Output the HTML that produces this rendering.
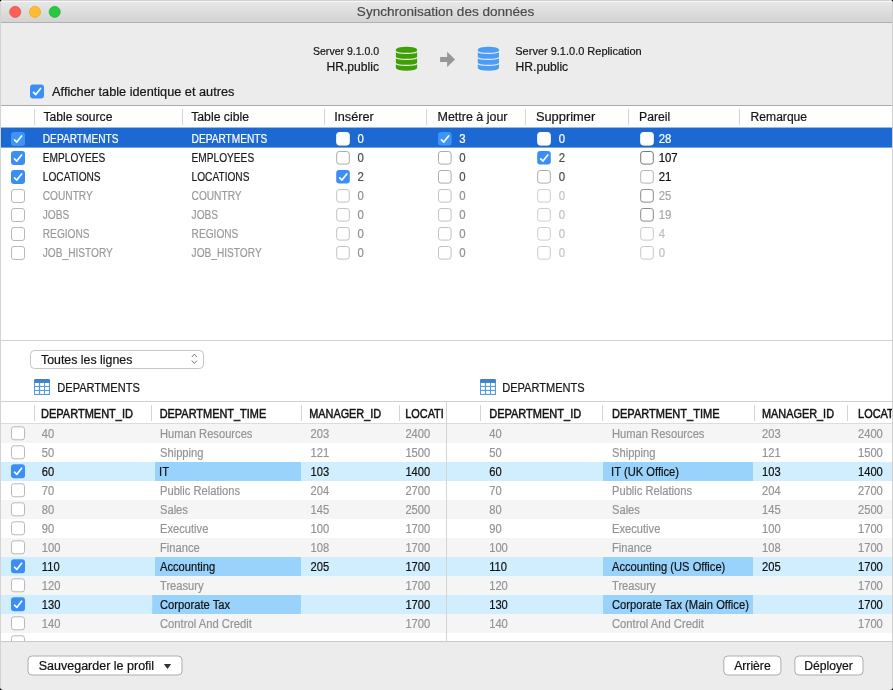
<!DOCTYPE html>
<html><head><meta charset="utf-8"><title>Synchronisation des données</title>
<style>html,body{margin:0;padding:0;background:#000;overflow:hidden} svg{display:block;will-change:transform} text{font-family:"Liberation Sans", sans-serif}</style></head>
<body><svg width="893" height="690" viewBox="0 0 893 690">
<rect x="0" y="0" width="893" height="690" rx="0" fill="#000" />
<defs><linearGradient id="tb" x1="0" y1="0" x2="0" y2="1"><stop offset="0" stop-color="#e9e9e9"/><stop offset="1" stop-color="#d3d3d3"/></linearGradient><clipPath id="cl1"><rect x="1" y="402" width="445" height="239"/></clipPath><clipPath id="cl2"><rect x="447" y="402" width="445" height="239"/></clipPath></defs>
<rect x="0" y="0" width="893" height="690" rx="3.5" fill="#ececec" />
<path d="M0,3.5 A3.5,3.5 0 0 1 3.5,0 H889.5 A3.5,3.5 0 0 1 893,3.5 V22 H0 Z" fill="url(#tb)"/>
<rect x="3" y="0" width="887" height="1" fill="#d2d2d2"/>
<rect x="2" y="1" width="889" height="1" fill="#f7f7f7"/>
<rect x="0" y="22" width="893" height="1" fill="#b1b1b1"/>
<rect x="0" y="3" width="1" height="684" fill="#d3d3d3"/>
<rect x="892" y="3" width="1" height="684" fill="#d0d0d0"/>
<circle cx="15.2" cy="11.9" r="5.6" fill="#fe5f57" stroke="#e2463f" stroke-width="0.6"/>
<circle cx="35.0" cy="11.9" r="5.6" fill="#febc2e" stroke="#e1a325" stroke-width="0.6"/>
<circle cx="54.7" cy="11.9" r="5.6" fill="#28c840" stroke="#1dad2b" stroke-width="0.6"/>
<text x="356.86" y="16.3" font-size="13" fill="#4b4b4b" stroke="#4b4b4b" stroke-width="0.2" textLength="177.48" lengthAdjust="spacingAndGlyphs">Synchronisation des données</text>
<text x="313.00" y="54.8" font-size="11" fill="#151515" stroke="#151515" stroke-width="0.2" textLength="66.11" lengthAdjust="spacingAndGlyphs">Server 9.1.0.0</text>
<text x="326.50" y="70.6" font-size="12" fill="#151515" stroke="#151515" stroke-width="0.2" textLength="52.50" lengthAdjust="spacingAndGlyphs">HR.public</text>
<text x="515.30" y="54.8" font-size="11" fill="#151515" stroke="#151515" stroke-width="0.2" textLength="126.42" lengthAdjust="spacingAndGlyphs">Server 9.1.0.0 Replication</text>
<text x="515.60" y="70.6" font-size="12" fill="#151515" stroke="#151515" stroke-width="0.2" textLength="52.60" lengthAdjust="spacingAndGlyphs">HR.public</text>
<path d="M395.9,49.7 A10.6,3 0 0 1 417.09999999999997,49.7 V68 A10.6,2.8 0 0 1 395.9,68 Z" fill="#3ea005"/>
<path d="M395.4,50.9 A11.1,2.5 0 0 0 417.59999999999997,50.9" fill="none" stroke="#ececec" stroke-width="1.1"/>
<path d="M395.4,56.9 A11.1,2.5 0 0 0 417.59999999999997,56.9" fill="none" stroke="#ececec" stroke-width="1.1"/>
<path d="M395.4,62.9 A11.1,2.5 0 0 0 417.59999999999997,62.9" fill="none" stroke="#ececec" stroke-width="1.1"/>
<path d="M477.8,49.7 A10.6,3 0 0 1 499.0,49.7 V68 A10.6,2.8 0 0 1 477.8,68 Z" fill="#4b9cf4"/>
<path d="M477.3,50.9 A11.1,2.5 0 0 0 499.5,50.9" fill="none" stroke="#ececec" stroke-width="1.1"/>
<path d="M477.3,56.9 A11.1,2.5 0 0 0 499.5,56.9" fill="none" stroke="#ececec" stroke-width="1.1"/>
<path d="M477.3,62.9 A11.1,2.5 0 0 0 499.5,62.9" fill="none" stroke="#ececec" stroke-width="1.1"/>
<path d="M440.1,57.1 H447.1 V51.8 L455.1,59.4 L447.1,67 V61.9 H440.1 Z" fill="#979797"/>
<rect x="30" y="84.5" width="14" height="14" rx="3" fill="#3b8ef6"/>
<path d="M33.5,92.4 L35.8,94.6 L40.6,88.4" fill="none" stroke="#fff" stroke-width="1.65" stroke-linecap="round" stroke-linejoin="round"/>
<text x="52.10" y="96" font-size="12" fill="#151515" stroke="#151515" stroke-width="0.2" textLength="182.30" lengthAdjust="spacingAndGlyphs">Afficher table identique et autres</text>
<rect x="1" y="105.5" width="891" height="234.5" rx="0" fill="#ffffff" />
<rect x="1" y="105" width="891" height="1" fill="#ababab"/>
<rect x="1" y="127" width="891" height="1" fill="#dadada"/>
<rect x="1" y="340" width="891" height="1" fill="#d2d2d2"/>
<rect x="34" y="109" width="1" height="16" fill="#d6d6d6"/>
<rect x="182" y="109" width="1" height="16" fill="#d6d6d6"/>
<rect x="324" y="109" width="1" height="16" fill="#d6d6d6"/>
<rect x="426" y="109" width="1" height="16" fill="#d6d6d6"/>
<rect x="525" y="109" width="1" height="16" fill="#d6d6d6"/>
<rect x="628" y="109" width="1" height="16" fill="#d6d6d6"/>
<rect x="739" y="109" width="1" height="16" fill="#d6d6d6"/>
<text x="43.40" y="120.7" font-size="12" fill="#151515" stroke="#151515" stroke-width="0.2" textLength="69.07" lengthAdjust="spacingAndGlyphs">Table source</text>
<text x="191.20" y="120.7" font-size="12" fill="#151515" stroke="#151515" stroke-width="0.2" textLength="57.84" lengthAdjust="spacingAndGlyphs">Table cible</text>
<text x="334.24" y="120.7" font-size="12" fill="#151515" stroke="#151515" stroke-width="0.2" textLength="39.55" lengthAdjust="spacingAndGlyphs">Insérer</text>
<text x="437.50" y="120.7" font-size="12" fill="#151515" stroke="#151515" stroke-width="0.2" textLength="70.00" lengthAdjust="spacingAndGlyphs">Mettre à jour</text>
<text x="535.90" y="120.7" font-size="12" fill="#151515" stroke="#151515" stroke-width="0.2" textLength="59.30" lengthAdjust="spacingAndGlyphs">Supprimer</text>
<text x="639.00" y="120.7" font-size="12" fill="#151515" stroke="#151515" stroke-width="0.2" textLength="31.18" lengthAdjust="spacingAndGlyphs">Pareil</text>
<text x="750.60" y="120.7" font-size="12" fill="#151515" stroke="#151515" stroke-width="0.2" textLength="56.47" lengthAdjust="spacingAndGlyphs">Remarque</text>
<rect x="1" y="127.7" width="891" height="19.9" rx="0" fill="#1d69d3" />
<rect x="11" y="132" width="14" height="14" rx="3" fill="#3d95f8"/>
<path d="M14.5,139.9 L16.8,142.1 L21.6,135.9" fill="none" stroke="#fff" stroke-width="1.65" stroke-linecap="round" stroke-linejoin="round"/>
<text x="42.80" y="142.6" font-size="12" fill="#ffffff" stroke="#ffffff" stroke-width="0.2" textLength="75.68" lengthAdjust="spacingAndGlyphs">DEPARTMENTS</text>
<text x="191.60" y="142.6" font-size="12" fill="#ffffff" stroke="#ffffff" stroke-width="0.2" textLength="75.68" lengthAdjust="spacingAndGlyphs">DEPARTMENTS</text>
<rect x="336.7" y="132.5" width="12.6" height="12.6" rx="2.5" fill="#ffffff" stroke="#ffffff" stroke-width="1"/>
<text x="357.60" y="142.6" font-size="12" fill="#ffffff" stroke="#ffffff" stroke-width="0.2" textLength="6.34" lengthAdjust="spacingAndGlyphs">0</text>
<rect x="438.0" y="132" width="13.6" height="13.6" rx="3" fill="#3d95f8"/>
<path d="M441.5,139.9 L443.8,142.1 L448.6,135.9" fill="none" stroke="#fff" stroke-width="1.65" stroke-linecap="round" stroke-linejoin="round"/>
<text x="459.20" y="142.6" font-size="12" fill="#ffffff" stroke="#ffffff" stroke-width="0.2" textLength="6.34" lengthAdjust="spacingAndGlyphs">3</text>
<rect x="537.7" y="132.5" width="12.6" height="12.6" rx="2.5" fill="#ffffff" stroke="#ffffff" stroke-width="1"/>
<text x="558.80" y="142.6" font-size="12" fill="#ffffff" stroke="#ffffff" stroke-width="0.2" textLength="6.34" lengthAdjust="spacingAndGlyphs">0</text>
<rect x="640.7" y="132.5" width="12.6" height="12.6" rx="2.5" fill="#ffffff" stroke="#ffffff" stroke-width="1"/>
<text x="658.70" y="142.6" font-size="12" fill="#ffffff" stroke="#ffffff" stroke-width="0.2" textLength="12.68" lengthAdjust="spacingAndGlyphs">28</text>
<rect x="11" y="151" width="14" height="14" rx="3" fill="#3b8ef6"/>
<path d="M14.5,158.9 L16.8,161.1 L21.6,154.9" fill="none" stroke="#fff" stroke-width="1.65" stroke-linecap="round" stroke-linejoin="round"/>
<text x="42.80" y="161.6" font-size="12" fill="#1a1a1a" stroke="#1a1a1a" stroke-width="0.2" textLength="62.55" lengthAdjust="spacingAndGlyphs">EMPLOYEES</text>
<text x="191.60" y="161.6" font-size="12" fill="#1a1a1a" stroke="#1a1a1a" stroke-width="0.2" textLength="62.55" lengthAdjust="spacingAndGlyphs">EMPLOYEES</text>
<rect x="336.7" y="151.5" width="12.6" height="12.6" rx="2.5" fill="#ffffff" stroke="#ababab" stroke-width="1"/>
<text x="357.60" y="161.6" font-size="12" fill="#4a4a4a" stroke="#4a4a4a" stroke-width="0.2" textLength="6.34" lengthAdjust="spacingAndGlyphs">0</text>
<rect x="438.5" y="151.5" width="12.6" height="12.6" rx="2.5" fill="#ffffff" stroke="#ababab" stroke-width="1"/>
<text x="459.20" y="161.6" font-size="12" fill="#4a4a4a" stroke="#4a4a4a" stroke-width="0.2" textLength="6.34" lengthAdjust="spacingAndGlyphs">0</text>
<rect x="537.2" y="151" width="13.6" height="13.6" rx="3" fill="#3b8ef6"/>
<path d="M540.7,158.9 L543.0,161.1 L547.8000000000001,154.9" fill="none" stroke="#fff" stroke-width="1.65" stroke-linecap="round" stroke-linejoin="round"/>
<text x="558.80" y="161.6" font-size="12" fill="#4a4a4a" stroke="#4a4a4a" stroke-width="0.2" textLength="6.34" lengthAdjust="spacingAndGlyphs">2</text>
<rect x="640.7" y="151.5" width="12.6" height="12.6" rx="2.5" fill="#ffffff" stroke="#777777" stroke-width="1"/>
<text x="658.70" y="161.6" font-size="12" fill="#111111" stroke="#111111" stroke-width="0.2" textLength="19.02" lengthAdjust="spacingAndGlyphs">107</text>
<rect x="11" y="170" width="14" height="14" rx="3" fill="#3b8ef6"/>
<path d="M14.5,177.9 L16.8,180.1 L21.6,173.9" fill="none" stroke="#fff" stroke-width="1.65" stroke-linecap="round" stroke-linejoin="round"/>
<text x="42.80" y="180.6" font-size="12" fill="#1a1a1a" stroke="#1a1a1a" stroke-width="0.2" textLength="57.84" lengthAdjust="spacingAndGlyphs">LOCATIONS</text>
<text x="191.60" y="180.6" font-size="12" fill="#1a1a1a" stroke="#1a1a1a" stroke-width="0.2" textLength="57.84" lengthAdjust="spacingAndGlyphs">LOCATIONS</text>
<rect x="336.2" y="170" width="13.6" height="13.6" rx="3" fill="#3b8ef6"/>
<path d="M339.7,177.9 L342.0,180.1 L346.8,173.9" fill="none" stroke="#fff" stroke-width="1.65" stroke-linecap="round" stroke-linejoin="round"/>
<text x="357.60" y="180.6" font-size="12" fill="#4a4a4a" stroke="#4a4a4a" stroke-width="0.2" textLength="6.34" lengthAdjust="spacingAndGlyphs">2</text>
<rect x="438.5" y="170.5" width="12.6" height="12.6" rx="2.5" fill="#ffffff" stroke="#ababab" stroke-width="1"/>
<text x="459.20" y="180.6" font-size="12" fill="#4a4a4a" stroke="#4a4a4a" stroke-width="0.2" textLength="6.34" lengthAdjust="spacingAndGlyphs">0</text>
<rect x="537.7" y="170.5" width="12.6" height="12.6" rx="2.5" fill="#ffffff" stroke="#ababab" stroke-width="1"/>
<text x="558.80" y="180.6" font-size="12" fill="#4a4a4a" stroke="#4a4a4a" stroke-width="0.2" textLength="6.34" lengthAdjust="spacingAndGlyphs">0</text>
<rect x="640.7" y="170.5" width="12.6" height="12.6" rx="2.5" fill="#ffffff" stroke="#b4b4b4" stroke-width="1"/>
<text x="658.70" y="180.6" font-size="12" fill="#111111" stroke="#111111" stroke-width="0.2" textLength="12.68" lengthAdjust="spacingAndGlyphs">21</text>
<rect x="11.5" y="189.5" width="13" height="13" rx="2.5" fill="#ffffff" stroke="#b8b8b8" stroke-width="1"/>
<text x="42.80" y="199.6" font-size="12" fill="#9a9a9a" stroke="#9a9a9a" stroke-width="0.2" textLength="49.95" lengthAdjust="spacingAndGlyphs">COUNTRY</text>
<text x="191.60" y="199.6" font-size="12" fill="#9a9a9a" stroke="#9a9a9a" stroke-width="0.2" textLength="49.95" lengthAdjust="spacingAndGlyphs">COUNTRY</text>
<rect x="336.7" y="189.5" width="12.6" height="12.6" rx="2.5" fill="#ffffff" stroke="#c2c2c2" stroke-width="1"/>
<text x="357.60" y="199.6" font-size="12" fill="#8f8f8f" stroke="#8f8f8f" stroke-width="0.2" textLength="6.34" lengthAdjust="spacingAndGlyphs">0</text>
<rect x="438.5" y="189.5" width="12.6" height="12.6" rx="2.5" fill="#ffffff" stroke="#c2c2c2" stroke-width="1"/>
<text x="459.20" y="199.6" font-size="12" fill="#8f8f8f" stroke="#8f8f8f" stroke-width="0.2" textLength="6.34" lengthAdjust="spacingAndGlyphs">0</text>
<rect x="537.7" y="189.5" width="12.6" height="12.6" rx="2.5" fill="#ffffff" stroke="#cdcdcd" stroke-width="1"/>
<text x="558.80" y="199.6" font-size="12" fill="#c3c3c3" stroke="#c3c3c3" stroke-width="0.2" textLength="6.34" lengthAdjust="spacingAndGlyphs">0</text>
<rect x="640.7" y="189.5" width="12.6" height="12.6" rx="2.5" fill="#ffffff" stroke="#8a8a8a" stroke-width="1"/>
<text x="658.70" y="199.6" font-size="12" fill="#a8a8a8" stroke="#a8a8a8" stroke-width="0.2" textLength="12.68" lengthAdjust="spacingAndGlyphs">25</text>
<rect x="11.5" y="208.5" width="13" height="13" rx="2.5" fill="#ffffff" stroke="#b8b8b8" stroke-width="1"/>
<text x="42.80" y="218.6" font-size="12" fill="#9a9a9a" stroke="#9a9a9a" stroke-width="0.2" textLength="26.48" lengthAdjust="spacingAndGlyphs">JOBS</text>
<text x="191.60" y="218.6" font-size="12" fill="#9a9a9a" stroke="#9a9a9a" stroke-width="0.2" textLength="26.48" lengthAdjust="spacingAndGlyphs">JOBS</text>
<rect x="336.7" y="208.5" width="12.6" height="12.6" rx="2.5" fill="#ffffff" stroke="#c2c2c2" stroke-width="1"/>
<text x="357.60" y="218.6" font-size="12" fill="#8f8f8f" stroke="#8f8f8f" stroke-width="0.2" textLength="6.34" lengthAdjust="spacingAndGlyphs">0</text>
<rect x="438.5" y="208.5" width="12.6" height="12.6" rx="2.5" fill="#ffffff" stroke="#c2c2c2" stroke-width="1"/>
<text x="459.20" y="218.6" font-size="12" fill="#8f8f8f" stroke="#8f8f8f" stroke-width="0.2" textLength="6.34" lengthAdjust="spacingAndGlyphs">0</text>
<rect x="537.7" y="208.5" width="12.6" height="12.6" rx="2.5" fill="#ffffff" stroke="#cdcdcd" stroke-width="1"/>
<text x="558.80" y="218.6" font-size="12" fill="#c3c3c3" stroke="#c3c3c3" stroke-width="0.2" textLength="6.34" lengthAdjust="spacingAndGlyphs">0</text>
<rect x="640.7" y="208.5" width="12.6" height="12.6" rx="2.5" fill="#ffffff" stroke="#8a8a8a" stroke-width="1"/>
<text x="658.70" y="218.6" font-size="12" fill="#a8a8a8" stroke="#a8a8a8" stroke-width="0.2" textLength="12.68" lengthAdjust="spacingAndGlyphs">19</text>
<rect x="11.5" y="227.5" width="13" height="13" rx="2.5" fill="#ffffff" stroke="#b8b8b8" stroke-width="1"/>
<text x="42.80" y="237.6" font-size="12" fill="#9a9a9a" stroke="#9a9a9a" stroke-width="0.2" textLength="46.76" lengthAdjust="spacingAndGlyphs">REGIONS</text>
<text x="191.60" y="237.6" font-size="12" fill="#9a9a9a" stroke="#9a9a9a" stroke-width="0.2" textLength="46.76" lengthAdjust="spacingAndGlyphs">REGIONS</text>
<rect x="336.7" y="227.5" width="12.6" height="12.6" rx="2.5" fill="#ffffff" stroke="#c2c2c2" stroke-width="1"/>
<text x="357.60" y="237.6" font-size="12" fill="#8f8f8f" stroke="#8f8f8f" stroke-width="0.2" textLength="6.34" lengthAdjust="spacingAndGlyphs">0</text>
<rect x="438.5" y="227.5" width="12.6" height="12.6" rx="2.5" fill="#ffffff" stroke="#c2c2c2" stroke-width="1"/>
<text x="459.20" y="237.6" font-size="12" fill="#8f8f8f" stroke="#8f8f8f" stroke-width="0.2" textLength="6.34" lengthAdjust="spacingAndGlyphs">0</text>
<rect x="537.7" y="227.5" width="12.6" height="12.6" rx="2.5" fill="#ffffff" stroke="#cdcdcd" stroke-width="1"/>
<text x="558.80" y="237.6" font-size="12" fill="#c3c3c3" stroke="#c3c3c3" stroke-width="0.2" textLength="6.34" lengthAdjust="spacingAndGlyphs">0</text>
<rect x="640.7" y="227.5" width="12.6" height="12.6" rx="2.5" fill="#ffffff" stroke="#c8c8c8" stroke-width="1"/>
<text x="658.70" y="237.6" font-size="12" fill="#c0c0c0" stroke="#c0c0c0" stroke-width="0.2" textLength="6.34" lengthAdjust="spacingAndGlyphs">4</text>
<rect x="11.5" y="246.5" width="13" height="13" rx="2.5" fill="#ffffff" stroke="#b8b8b8" stroke-width="1"/>
<text x="42.80" y="256.6" font-size="12" fill="#9a9a9a" stroke="#9a9a9a" stroke-width="0.2" textLength="70.06" lengthAdjust="spacingAndGlyphs">JOB_HISTORY</text>
<text x="191.60" y="256.6" font-size="12" fill="#9a9a9a" stroke="#9a9a9a" stroke-width="0.2" textLength="70.06" lengthAdjust="spacingAndGlyphs">JOB_HISTORY</text>
<rect x="336.7" y="246.5" width="12.6" height="12.6" rx="2.5" fill="#ffffff" stroke="#c2c2c2" stroke-width="1"/>
<text x="357.60" y="256.6" font-size="12" fill="#8f8f8f" stroke="#8f8f8f" stroke-width="0.2" textLength="6.34" lengthAdjust="spacingAndGlyphs">0</text>
<rect x="438.5" y="246.5" width="12.6" height="12.6" rx="2.5" fill="#ffffff" stroke="#c2c2c2" stroke-width="1"/>
<text x="459.20" y="256.6" font-size="12" fill="#8f8f8f" stroke="#8f8f8f" stroke-width="0.2" textLength="6.34" lengthAdjust="spacingAndGlyphs">0</text>
<rect x="537.7" y="246.5" width="12.6" height="12.6" rx="2.5" fill="#ffffff" stroke="#cdcdcd" stroke-width="1"/>
<text x="558.80" y="256.6" font-size="12" fill="#c3c3c3" stroke="#c3c3c3" stroke-width="0.2" textLength="6.34" lengthAdjust="spacingAndGlyphs">0</text>
<rect x="640.7" y="246.5" width="12.6" height="12.6" rx="2.5" fill="#ffffff" stroke="#c8c8c8" stroke-width="1"/>
<text x="658.70" y="256.6" font-size="12" fill="#c0c0c0" stroke="#c0c0c0" stroke-width="0.2" textLength="6.34" lengthAdjust="spacingAndGlyphs">0</text>
<rect x="1" y="341" width="891" height="60" rx="0" fill="#ffffff" />
<rect x="30.5" y="350.5" width="173" height="18" rx="4" fill="#ffffff" stroke="#c6c6c6" stroke-width="1" />
<text x="41.00" y="363.5" font-size="12" fill="#151515" stroke="#151515" stroke-width="0.2" textLength="91.38" lengthAdjust="spacingAndGlyphs">Toutes les lignes</text>
<path d="M191.8,357 L194.4,354.2 L197,357 M191.8,360.6 L194.4,363.4 L197,360.6" fill="none" stroke="#6a6a6a" stroke-width="0.9"/>
<path d="M34,380.5 A1.5,1.5 0 0 1 35.5,379 H48.5 A1.5,1.5 0 0 1 50,380.5 V395 H34 Z" fill="#559be4"/>
<rect x="34" y="379" width="16" height="3.7" rx="1.5" fill="#3f82c8" />
<rect x="35.0" y="383.0" width="3.9" height="2.9" rx="0" fill="#ffffff" />
<rect x="35.0" y="387.0" width="3.9" height="2.9" rx="0" fill="#ffffff" />
<rect x="35.0" y="391.0" width="3.9" height="2.9" rx="0" fill="#ffffff" />
<rect x="40.1" y="383.0" width="3.9" height="2.9" rx="0" fill="#ffffff" />
<rect x="40.1" y="387.0" width="3.9" height="2.9" rx="0" fill="#ffffff" />
<rect x="40.1" y="391.0" width="3.9" height="2.9" rx="0" fill="#ffffff" />
<rect x="45.0" y="383.0" width="3.9" height="2.9" rx="0" fill="#ffffff" />
<rect x="45.0" y="387.0" width="3.9" height="2.9" rx="0" fill="#ffffff" />
<rect x="45.0" y="391.0" width="3.9" height="2.9" rx="0" fill="#ffffff" />
<path d="M480,380.5 A1.5,1.5 0 0 1 481.5,379 H494.5 A1.5,1.5 0 0 1 496,380.5 V395 H480 Z" fill="#559be4"/>
<rect x="480" y="379" width="16" height="3.7" rx="1.5" fill="#3f82c8" />
<rect x="481.0" y="383.0" width="3.9" height="2.9" rx="0" fill="#ffffff" />
<rect x="481.0" y="387.0" width="3.9" height="2.9" rx="0" fill="#ffffff" />
<rect x="481.0" y="391.0" width="3.9" height="2.9" rx="0" fill="#ffffff" />
<rect x="486.1" y="383.0" width="3.9" height="2.9" rx="0" fill="#ffffff" />
<rect x="486.1" y="387.0" width="3.9" height="2.9" rx="0" fill="#ffffff" />
<rect x="486.1" y="391.0" width="3.9" height="2.9" rx="0" fill="#ffffff" />
<rect x="491.0" y="383.0" width="3.9" height="2.9" rx="0" fill="#ffffff" />
<rect x="491.0" y="387.0" width="3.9" height="2.9" rx="0" fill="#ffffff" />
<rect x="491.0" y="391.0" width="3.9" height="2.9" rx="0" fill="#ffffff" />
<text x="57.30" y="391.7" font-size="12" fill="#151515" stroke="#151515" stroke-width="0.2" textLength="82.50" lengthAdjust="spacingAndGlyphs">DEPARTMENTS</text>
<text x="502.20" y="391.7" font-size="12" fill="#151515" stroke="#151515" stroke-width="0.2" textLength="82.50" lengthAdjust="spacingAndGlyphs">DEPARTMENTS</text>
<rect x="1" y="401.5" width="891" height="239.5" rx="0" fill="#ffffff" />
<rect x="1" y="401" width="891" height="1" fill="#cfcfcf"/>
<rect x="1" y="423" width="891" height="1" fill="#dcdcdc"/>
<rect x="1" y="641" width="891" height="1" fill="#c9c9c9"/>
<rect x="1" y="424" width="891" height="19" rx="0" fill="#f5f5f5" />
<rect x="1" y="443" width="891" height="19" rx="0" fill="#ffffff" />
<rect x="1" y="462" width="891" height="19" rx="0" fill="#d0eefd" />
<rect x="1" y="481" width="891" height="19" rx="0" fill="#ffffff" />
<rect x="1" y="500" width="891" height="19" rx="0" fill="#f5f5f5" />
<rect x="1" y="519" width="891" height="19" rx="0" fill="#ffffff" />
<rect x="1" y="538" width="891" height="19" rx="0" fill="#f5f5f5" />
<rect x="1" y="557" width="891" height="19" rx="0" fill="#d0eefd" />
<rect x="1" y="576" width="891" height="19" rx="0" fill="#f5f5f5" />
<rect x="1" y="595" width="891" height="19" rx="0" fill="#d0eefd" />
<rect x="1" y="614" width="891" height="19" rx="0" fill="#f5f5f5" />
<rect x="1" y="633" width="891" height="19" rx="0" fill="#ffffff" />
<rect x="155" y="462" width="146" height="19" rx="0" fill="#99d3fb" />
<rect x="603" y="462" width="150" height="19" rx="0" fill="#99d3fb" />
<rect x="155" y="557" width="146" height="19" rx="0" fill="#99d3fb" />
<rect x="603" y="557" width="150" height="19" rx="0" fill="#99d3fb" />
<rect x="152.2" y="595" width="148.8" height="19" rx="0" fill="#99d3fb" />
<rect x="603" y="595" width="150" height="19" rx="0" fill="#99d3fb" />
<rect x="34" y="405" width="1" height="16" fill="#d4d4d4"/>
<text x="41.00" y="417.5" font-size="12" fill="#111111" stroke="#111111" stroke-width="0.45" textLength="91.99" lengthAdjust="spacingAndGlyphs" clip-path="url(#cl1)">DEPARTMENT_ID</text>
<rect x="151" y="405" width="1" height="16" fill="#d4d4d4"/>
<text x="159.70" y="417.5" font-size="12" fill="#111111" stroke="#111111" stroke-width="0.45" textLength="106.50" lengthAdjust="spacingAndGlyphs" clip-path="url(#cl1)">DEPARTMENT_TIME</text>
<rect x="301" y="405" width="1" height="16" fill="#d4d4d4"/>
<text x="309.20" y="417.5" font-size="12" fill="#111111" stroke="#111111" stroke-width="0.45" textLength="72.00" lengthAdjust="spacingAndGlyphs" clip-path="url(#cl1)">MANAGER_ID</text>
<rect x="399" y="405" width="1" height="16" fill="#d4d4d4"/>
<text x="405.20" y="417.5" font-size="12" fill="#111111" stroke="#111111" stroke-width="0.45" textLength="38.63" lengthAdjust="spacingAndGlyphs" clip-path="url(#cl1)">LOCATI</text>
<rect x="480" y="405" width="1" height="16" fill="#d4d4d4"/>
<text x="489.20" y="417.5" font-size="12" fill="#111111" stroke="#111111" stroke-width="0.45" textLength="91.99" lengthAdjust="spacingAndGlyphs" clip-path="url(#cl2)">DEPARTMENT_ID</text>
<rect x="602" y="405" width="1" height="16" fill="#d4d4d4"/>
<text x="612.00" y="417.5" font-size="12" fill="#111111" stroke="#111111" stroke-width="0.45" textLength="107.60" lengthAdjust="spacingAndGlyphs" clip-path="url(#cl2)">DEPARTMENT_TIME</text>
<rect x="754" y="405" width="1" height="16" fill="#d4d4d4"/>
<text x="762.00" y="417.5" font-size="12" fill="#111111" stroke="#111111" stroke-width="0.45" textLength="72.00" lengthAdjust="spacingAndGlyphs" clip-path="url(#cl2)">MANAGER_ID</text>
<rect x="847" y="405" width="1" height="16" fill="#d4d4d4"/>
<text x="858.10" y="417.5" font-size="12" fill="#111111" stroke="#111111" stroke-width="0.45" textLength="72.00" lengthAdjust="spacingAndGlyphs" clip-path="url(#cl2)">LOCATION_ID</text>
<rect x="11.5" y="426.8" width="13" height="13" rx="2.5" fill="#ffffff" stroke="#b8b8b8" stroke-width="1"/>
<text x="41.80" y="437.5" font-size="12" fill="#949494" stroke="#949494" stroke-width="0.2" textLength="12.41" lengthAdjust="spacingAndGlyphs" clip-path="url(#cl1)">40</text>
<text x="160.00" y="437.5" font-size="12" fill="#949494" stroke="#949494" stroke-width="0.2" textLength="92.42" lengthAdjust="spacingAndGlyphs" clip-path="url(#cl1)">Human Resources</text>
<text x="310.50" y="437.5" font-size="12" fill="#949494" stroke="#949494" stroke-width="0.2" textLength="18.62" lengthAdjust="spacingAndGlyphs" clip-path="url(#cl1)">203</text>
<text x="405.40" y="437.5" font-size="12" fill="#949494" stroke="#949494" stroke-width="0.2" textLength="24.83" lengthAdjust="spacingAndGlyphs" clip-path="url(#cl1)">2400</text>
<text x="489.20" y="437.5" font-size="12" fill="#949494" stroke="#949494" stroke-width="0.2" textLength="12.41" lengthAdjust="spacingAndGlyphs" clip-path="url(#cl2)">40</text>
<text x="612.00" y="437.5" font-size="12" fill="#949494" stroke="#949494" stroke-width="0.2" textLength="92.42" lengthAdjust="spacingAndGlyphs" clip-path="url(#cl2)">Human Resources</text>
<text x="762.00" y="437.5" font-size="12" fill="#949494" stroke="#949494" stroke-width="0.2" textLength="18.62" lengthAdjust="spacingAndGlyphs" clip-path="url(#cl2)">203</text>
<text x="858.00" y="437.5" font-size="12" fill="#949494" stroke="#949494" stroke-width="0.2" textLength="24.83" lengthAdjust="spacingAndGlyphs" clip-path="url(#cl2)">2400</text>
<rect x="11.5" y="445.8" width="13" height="13" rx="2.5" fill="#ffffff" stroke="#b8b8b8" stroke-width="1"/>
<text x="41.80" y="456.5" font-size="12" fill="#949494" stroke="#949494" stroke-width="0.2" textLength="12.41" lengthAdjust="spacingAndGlyphs" clip-path="url(#cl1)">50</text>
<text x="160.00" y="456.5" font-size="12" fill="#949494" stroke="#949494" stroke-width="0.2" textLength="43.44" lengthAdjust="spacingAndGlyphs" clip-path="url(#cl1)">Shipping</text>
<text x="310.50" y="456.5" font-size="12" fill="#949494" stroke="#949494" stroke-width="0.2" textLength="18.62" lengthAdjust="spacingAndGlyphs" clip-path="url(#cl1)">121</text>
<text x="405.40" y="456.5" font-size="12" fill="#949494" stroke="#949494" stroke-width="0.2" textLength="24.83" lengthAdjust="spacingAndGlyphs" clip-path="url(#cl1)">1500</text>
<text x="489.20" y="456.5" font-size="12" fill="#949494" stroke="#949494" stroke-width="0.2" textLength="12.41" lengthAdjust="spacingAndGlyphs" clip-path="url(#cl2)">50</text>
<text x="612.00" y="456.5" font-size="12" fill="#949494" stroke="#949494" stroke-width="0.2" textLength="43.44" lengthAdjust="spacingAndGlyphs" clip-path="url(#cl2)">Shipping</text>
<text x="762.00" y="456.5" font-size="12" fill="#949494" stroke="#949494" stroke-width="0.2" textLength="18.62" lengthAdjust="spacingAndGlyphs" clip-path="url(#cl2)">121</text>
<text x="858.00" y="456.5" font-size="12" fill="#949494" stroke="#949494" stroke-width="0.2" textLength="24.83" lengthAdjust="spacingAndGlyphs" clip-path="url(#cl2)">1500</text>
<rect x="11" y="464.3" width="14" height="14" rx="3" fill="#3b8ef6"/>
<path d="M14.5,472.2 L16.8,474.40000000000003 L21.6,468.2" fill="none" stroke="#fff" stroke-width="1.65" stroke-linecap="round" stroke-linejoin="round"/>
<text x="41.80" y="475.5" font-size="12" fill="#111111" stroke="#111111" stroke-width="0.2" textLength="12.41" lengthAdjust="spacingAndGlyphs" clip-path="url(#cl1)">60</text>
<text x="159.07" y="475.5" font-size="12" fill="#111111" stroke="#111111" stroke-width="0.2" textLength="9.92" lengthAdjust="spacingAndGlyphs" clip-path="url(#cl1)">IT</text>
<text x="310.50" y="475.5" font-size="12" fill="#111111" stroke="#111111" stroke-width="0.2" textLength="18.62" lengthAdjust="spacingAndGlyphs" clip-path="url(#cl1)">103</text>
<text x="405.40" y="475.5" font-size="12" fill="#111111" stroke="#111111" stroke-width="0.2" textLength="24.83" lengthAdjust="spacingAndGlyphs" clip-path="url(#cl1)">1400</text>
<text x="489.20" y="475.5" font-size="12" fill="#111111" stroke="#111111" stroke-width="0.2" textLength="12.41" lengthAdjust="spacingAndGlyphs" clip-path="url(#cl2)">60</text>
<text x="611.07" y="475.5" font-size="12" fill="#111111" stroke="#111111" stroke-width="0.2" textLength="68.00" lengthAdjust="spacingAndGlyphs" clip-path="url(#cl2)">IT (UK Office)</text>
<text x="762.00" y="475.5" font-size="12" fill="#111111" stroke="#111111" stroke-width="0.2" textLength="18.62" lengthAdjust="spacingAndGlyphs" clip-path="url(#cl2)">103</text>
<text x="858.00" y="475.5" font-size="12" fill="#111111" stroke="#111111" stroke-width="0.2" textLength="24.83" lengthAdjust="spacingAndGlyphs" clip-path="url(#cl2)">1400</text>
<rect x="11.5" y="483.8" width="13" height="13" rx="2.5" fill="#ffffff" stroke="#b8b8b8" stroke-width="1"/>
<text x="41.80" y="494.5" font-size="12" fill="#949494" stroke="#949494" stroke-width="0.2" textLength="12.41" lengthAdjust="spacingAndGlyphs" clip-path="url(#cl1)">70</text>
<text x="160.00" y="494.5" font-size="12" fill="#949494" stroke="#949494" stroke-width="0.2" textLength="80.02" lengthAdjust="spacingAndGlyphs" clip-path="url(#cl1)">Public Relations</text>
<text x="310.50" y="494.5" font-size="12" fill="#949494" stroke="#949494" stroke-width="0.2" textLength="18.62" lengthAdjust="spacingAndGlyphs" clip-path="url(#cl1)">204</text>
<text x="405.40" y="494.5" font-size="12" fill="#949494" stroke="#949494" stroke-width="0.2" textLength="24.83" lengthAdjust="spacingAndGlyphs" clip-path="url(#cl1)">2700</text>
<text x="489.20" y="494.5" font-size="12" fill="#949494" stroke="#949494" stroke-width="0.2" textLength="12.41" lengthAdjust="spacingAndGlyphs" clip-path="url(#cl2)">70</text>
<text x="612.00" y="494.5" font-size="12" fill="#949494" stroke="#949494" stroke-width="0.2" textLength="80.02" lengthAdjust="spacingAndGlyphs" clip-path="url(#cl2)">Public Relations</text>
<text x="762.00" y="494.5" font-size="12" fill="#949494" stroke="#949494" stroke-width="0.2" textLength="18.62" lengthAdjust="spacingAndGlyphs" clip-path="url(#cl2)">204</text>
<text x="858.00" y="494.5" font-size="12" fill="#949494" stroke="#949494" stroke-width="0.2" textLength="24.83" lengthAdjust="spacingAndGlyphs" clip-path="url(#cl2)">2700</text>
<rect x="11.5" y="502.8" width="13" height="13" rx="2.5" fill="#ffffff" stroke="#b8b8b8" stroke-width="1"/>
<text x="41.80" y="513.5" font-size="12" fill="#949494" stroke="#949494" stroke-width="0.2" textLength="12.41" lengthAdjust="spacingAndGlyphs" clip-path="url(#cl1)">80</text>
<text x="160.00" y="513.5" font-size="12" fill="#949494" stroke="#949494" stroke-width="0.2" textLength="27.92" lengthAdjust="spacingAndGlyphs" clip-path="url(#cl1)">Sales</text>
<text x="310.50" y="513.5" font-size="12" fill="#949494" stroke="#949494" stroke-width="0.2" textLength="18.62" lengthAdjust="spacingAndGlyphs" clip-path="url(#cl1)">145</text>
<text x="405.40" y="513.5" font-size="12" fill="#949494" stroke="#949494" stroke-width="0.2" textLength="24.83" lengthAdjust="spacingAndGlyphs" clip-path="url(#cl1)">2500</text>
<text x="489.20" y="513.5" font-size="12" fill="#949494" stroke="#949494" stroke-width="0.2" textLength="12.41" lengthAdjust="spacingAndGlyphs" clip-path="url(#cl2)">80</text>
<text x="612.00" y="513.5" font-size="12" fill="#949494" stroke="#949494" stroke-width="0.2" textLength="27.92" lengthAdjust="spacingAndGlyphs" clip-path="url(#cl2)">Sales</text>
<text x="762.00" y="513.5" font-size="12" fill="#949494" stroke="#949494" stroke-width="0.2" textLength="18.62" lengthAdjust="spacingAndGlyphs" clip-path="url(#cl2)">145</text>
<text x="858.00" y="513.5" font-size="12" fill="#949494" stroke="#949494" stroke-width="0.2" textLength="24.83" lengthAdjust="spacingAndGlyphs" clip-path="url(#cl2)">2500</text>
<rect x="11.5" y="521.8" width="13" height="13" rx="2.5" fill="#ffffff" stroke="#b8b8b8" stroke-width="1"/>
<text x="41.80" y="532.5" font-size="12" fill="#949494" stroke="#949494" stroke-width="0.2" textLength="12.41" lengthAdjust="spacingAndGlyphs" clip-path="url(#cl1)">90</text>
<text x="160.00" y="532.5" font-size="12" fill="#949494" stroke="#949494" stroke-width="0.2" textLength="48.38" lengthAdjust="spacingAndGlyphs" clip-path="url(#cl1)">Executive</text>
<text x="310.50" y="532.5" font-size="12" fill="#949494" stroke="#949494" stroke-width="0.2" textLength="18.62" lengthAdjust="spacingAndGlyphs" clip-path="url(#cl1)">100</text>
<text x="405.40" y="532.5" font-size="12" fill="#949494" stroke="#949494" stroke-width="0.2" textLength="24.83" lengthAdjust="spacingAndGlyphs" clip-path="url(#cl1)">1700</text>
<text x="489.20" y="532.5" font-size="12" fill="#949494" stroke="#949494" stroke-width="0.2" textLength="12.41" lengthAdjust="spacingAndGlyphs" clip-path="url(#cl2)">90</text>
<text x="612.00" y="532.5" font-size="12" fill="#949494" stroke="#949494" stroke-width="0.2" textLength="48.38" lengthAdjust="spacingAndGlyphs" clip-path="url(#cl2)">Executive</text>
<text x="762.00" y="532.5" font-size="12" fill="#949494" stroke="#949494" stroke-width="0.2" textLength="18.62" lengthAdjust="spacingAndGlyphs" clip-path="url(#cl2)">100</text>
<text x="858.00" y="532.5" font-size="12" fill="#949494" stroke="#949494" stroke-width="0.2" textLength="24.83" lengthAdjust="spacingAndGlyphs" clip-path="url(#cl2)">1700</text>
<rect x="11.5" y="540.8" width="13" height="13" rx="2.5" fill="#ffffff" stroke="#b8b8b8" stroke-width="1"/>
<text x="41.80" y="551.5" font-size="12" fill="#949494" stroke="#949494" stroke-width="0.2" textLength="18.62" lengthAdjust="spacingAndGlyphs" clip-path="url(#cl1)">100</text>
<text x="160.00" y="551.5" font-size="12" fill="#949494" stroke="#949494" stroke-width="0.2" textLength="39.70" lengthAdjust="spacingAndGlyphs" clip-path="url(#cl1)">Finance</text>
<text x="310.50" y="551.5" font-size="12" fill="#949494" stroke="#949494" stroke-width="0.2" textLength="18.62" lengthAdjust="spacingAndGlyphs" clip-path="url(#cl1)">108</text>
<text x="405.40" y="551.5" font-size="12" fill="#949494" stroke="#949494" stroke-width="0.2" textLength="24.83" lengthAdjust="spacingAndGlyphs" clip-path="url(#cl1)">1700</text>
<text x="489.20" y="551.5" font-size="12" fill="#949494" stroke="#949494" stroke-width="0.2" textLength="18.62" lengthAdjust="spacingAndGlyphs" clip-path="url(#cl2)">100</text>
<text x="612.00" y="551.5" font-size="12" fill="#949494" stroke="#949494" stroke-width="0.2" textLength="39.70" lengthAdjust="spacingAndGlyphs" clip-path="url(#cl2)">Finance</text>
<text x="762.00" y="551.5" font-size="12" fill="#949494" stroke="#949494" stroke-width="0.2" textLength="18.62" lengthAdjust="spacingAndGlyphs" clip-path="url(#cl2)">108</text>
<text x="858.00" y="551.5" font-size="12" fill="#949494" stroke="#949494" stroke-width="0.2" textLength="24.83" lengthAdjust="spacingAndGlyphs" clip-path="url(#cl2)">1700</text>
<rect x="11" y="559.3" width="14" height="14" rx="3" fill="#3b8ef6"/>
<path d="M14.5,567.1999999999999 L16.8,569.4 L21.6,563.1999999999999" fill="none" stroke="#fff" stroke-width="1.65" stroke-linecap="round" stroke-linejoin="round"/>
<text x="41.80" y="570.5" font-size="12" fill="#111111" stroke="#111111" stroke-width="0.2" textLength="17.79" lengthAdjust="spacingAndGlyphs" clip-path="url(#cl1)">110</text>
<text x="160.00" y="570.5" font-size="12" fill="#111111" stroke="#111111" stroke-width="0.2" textLength="55.22" lengthAdjust="spacingAndGlyphs" clip-path="url(#cl1)">Accounting</text>
<text x="310.50" y="570.5" font-size="12" fill="#111111" stroke="#111111" stroke-width="0.2" textLength="18.62" lengthAdjust="spacingAndGlyphs" clip-path="url(#cl1)">205</text>
<text x="405.40" y="570.5" font-size="12" fill="#111111" stroke="#111111" stroke-width="0.2" textLength="24.83" lengthAdjust="spacingAndGlyphs" clip-path="url(#cl1)">1700</text>
<text x="489.20" y="570.5" font-size="12" fill="#111111" stroke="#111111" stroke-width="0.2" textLength="17.79" lengthAdjust="spacingAndGlyphs" clip-path="url(#cl2)">110</text>
<text x="612.00" y="570.5" font-size="12" fill="#111111" stroke="#111111" stroke-width="0.2" textLength="113.30" lengthAdjust="spacingAndGlyphs" clip-path="url(#cl2)">Accounting (US Office)</text>
<text x="762.00" y="570.5" font-size="12" fill="#111111" stroke="#111111" stroke-width="0.2" textLength="18.62" lengthAdjust="spacingAndGlyphs" clip-path="url(#cl2)">205</text>
<text x="858.00" y="570.5" font-size="12" fill="#111111" stroke="#111111" stroke-width="0.2" textLength="24.83" lengthAdjust="spacingAndGlyphs" clip-path="url(#cl2)">1700</text>
<rect x="11.5" y="578.8" width="13" height="13" rx="2.5" fill="#ffffff" stroke="#b8b8b8" stroke-width="1"/>
<text x="41.80" y="589.5" font-size="12" fill="#949494" stroke="#949494" stroke-width="0.2" textLength="18.62" lengthAdjust="spacingAndGlyphs" clip-path="url(#cl1)">120</text>
<text x="160.00" y="589.5" font-size="12" fill="#949494" stroke="#949494" stroke-width="0.2" textLength="43.62" lengthAdjust="spacingAndGlyphs" clip-path="url(#cl1)">Treasury</text>
<text x="405.40" y="589.5" font-size="12" fill="#949494" stroke="#949494" stroke-width="0.2" textLength="24.83" lengthAdjust="spacingAndGlyphs" clip-path="url(#cl1)">1700</text>
<text x="489.20" y="589.5" font-size="12" fill="#949494" stroke="#949494" stroke-width="0.2" textLength="18.62" lengthAdjust="spacingAndGlyphs" clip-path="url(#cl2)">120</text>
<text x="612.00" y="589.5" font-size="12" fill="#949494" stroke="#949494" stroke-width="0.2" textLength="43.62" lengthAdjust="spacingAndGlyphs" clip-path="url(#cl2)">Treasury</text>
<text x="858.00" y="589.5" font-size="12" fill="#949494" stroke="#949494" stroke-width="0.2" textLength="24.83" lengthAdjust="spacingAndGlyphs" clip-path="url(#cl2)">1700</text>
<rect x="11" y="597.3" width="14" height="14" rx="3" fill="#3b8ef6"/>
<path d="M14.5,605.1999999999999 L16.8,607.4 L21.6,601.1999999999999" fill="none" stroke="#fff" stroke-width="1.65" stroke-linecap="round" stroke-linejoin="round"/>
<text x="41.80" y="608.5" font-size="12" fill="#111111" stroke="#111111" stroke-width="0.2" textLength="18.62" lengthAdjust="spacingAndGlyphs" clip-path="url(#cl1)">130</text>
<text x="160.00" y="608.5" font-size="12" fill="#111111" stroke="#111111" stroke-width="0.2" textLength="70.09" lengthAdjust="spacingAndGlyphs" clip-path="url(#cl1)">Corporate Tax</text>
<text x="405.40" y="608.5" font-size="12" fill="#111111" stroke="#111111" stroke-width="0.2" textLength="24.83" lengthAdjust="spacingAndGlyphs" clip-path="url(#cl1)">1700</text>
<text x="489.20" y="608.5" font-size="12" fill="#111111" stroke="#111111" stroke-width="0.2" textLength="18.62" lengthAdjust="spacingAndGlyphs" clip-path="url(#cl2)">130</text>
<text x="612.00" y="608.5" font-size="12" fill="#111111" stroke="#111111" stroke-width="0.2" textLength="136.86" lengthAdjust="spacingAndGlyphs" clip-path="url(#cl2)">Corporate Tax (Main Office)</text>
<text x="858.00" y="608.5" font-size="12" fill="#111111" stroke="#111111" stroke-width="0.2" textLength="24.83" lengthAdjust="spacingAndGlyphs" clip-path="url(#cl2)">1700</text>
<rect x="11.5" y="616.8" width="13" height="13" rx="2.5" fill="#ffffff" stroke="#b8b8b8" stroke-width="1"/>
<text x="41.80" y="627.5" font-size="12" fill="#949494" stroke="#949494" stroke-width="0.2" textLength="18.62" lengthAdjust="spacingAndGlyphs" clip-path="url(#cl1)">140</text>
<text x="160.00" y="627.5" font-size="12" fill="#949494" stroke="#949494" stroke-width="0.2" textLength="91.80" lengthAdjust="spacingAndGlyphs" clip-path="url(#cl1)">Control And Credit</text>
<text x="405.40" y="627.5" font-size="12" fill="#949494" stroke="#949494" stroke-width="0.2" textLength="24.83" lengthAdjust="spacingAndGlyphs" clip-path="url(#cl1)">1700</text>
<text x="489.20" y="627.5" font-size="12" fill="#949494" stroke="#949494" stroke-width="0.2" textLength="18.62" lengthAdjust="spacingAndGlyphs" clip-path="url(#cl2)">140</text>
<text x="612.00" y="627.5" font-size="12" fill="#949494" stroke="#949494" stroke-width="0.2" textLength="91.80" lengthAdjust="spacingAndGlyphs" clip-path="url(#cl2)">Control And Credit</text>
<text x="858.00" y="627.5" font-size="12" fill="#949494" stroke="#949494" stroke-width="0.2" textLength="24.83" lengthAdjust="spacingAndGlyphs" clip-path="url(#cl2)">1700</text>
<rect x="11.5" y="635.8" width="13" height="13" rx="2.5" fill="#ffffff" stroke="#b8b8b8" stroke-width="1"/>
<rect x="1" y="641.5" width="891" height="44.5" rx="0" fill="#ececec" />
<rect x="1" y="641" width="891" height="1" fill="#c9c9c9"/>
<rect x="446" y="401.5" width="1" height="239.5" fill="#d4d4d4"/>
<rect x="28.0" y="656.0" width="154.0" height="19.0" rx="4" fill="#ffffff" stroke="#adadad" stroke-width="1"/>
<text x="38.75" y="669.7" font-size="12" fill="#111111" stroke="#111111" stroke-width="0.2" textLength="115.39" lengthAdjust="spacingAndGlyphs">Sauvegarder le profil</text>
<path d="M163.8,663.9 H171.2 L167.5,668.9 Z" fill="#333"/>
<rect x="723.8" y="656.0" width="57.10000000000002" height="19.0" rx="4" fill="#ffffff" stroke="#adadad" stroke-width="1"/>
<text x="734.20" y="669.7" font-size="12" fill="#111111" stroke="#111111" stroke-width="0.2" textLength="36.47" lengthAdjust="spacingAndGlyphs">Arrière</text>
<rect x="794.9" y="656.0" width="68.10000000000002" height="19.0" rx="4" fill="#ffffff" stroke="#adadad" stroke-width="1"/>
<text x="804.30" y="669.7" font-size="12" fill="#111111" stroke="#111111" stroke-width="0.2" textLength="48.60" lengthAdjust="spacingAndGlyphs">Déployer</text>
<rect x="0" y="22" width="1" height="665" fill="#d3d3d3"/>
<rect x="892" y="22" width="1" height="665" fill="#d0d0d0"/>
</svg></body></html>
